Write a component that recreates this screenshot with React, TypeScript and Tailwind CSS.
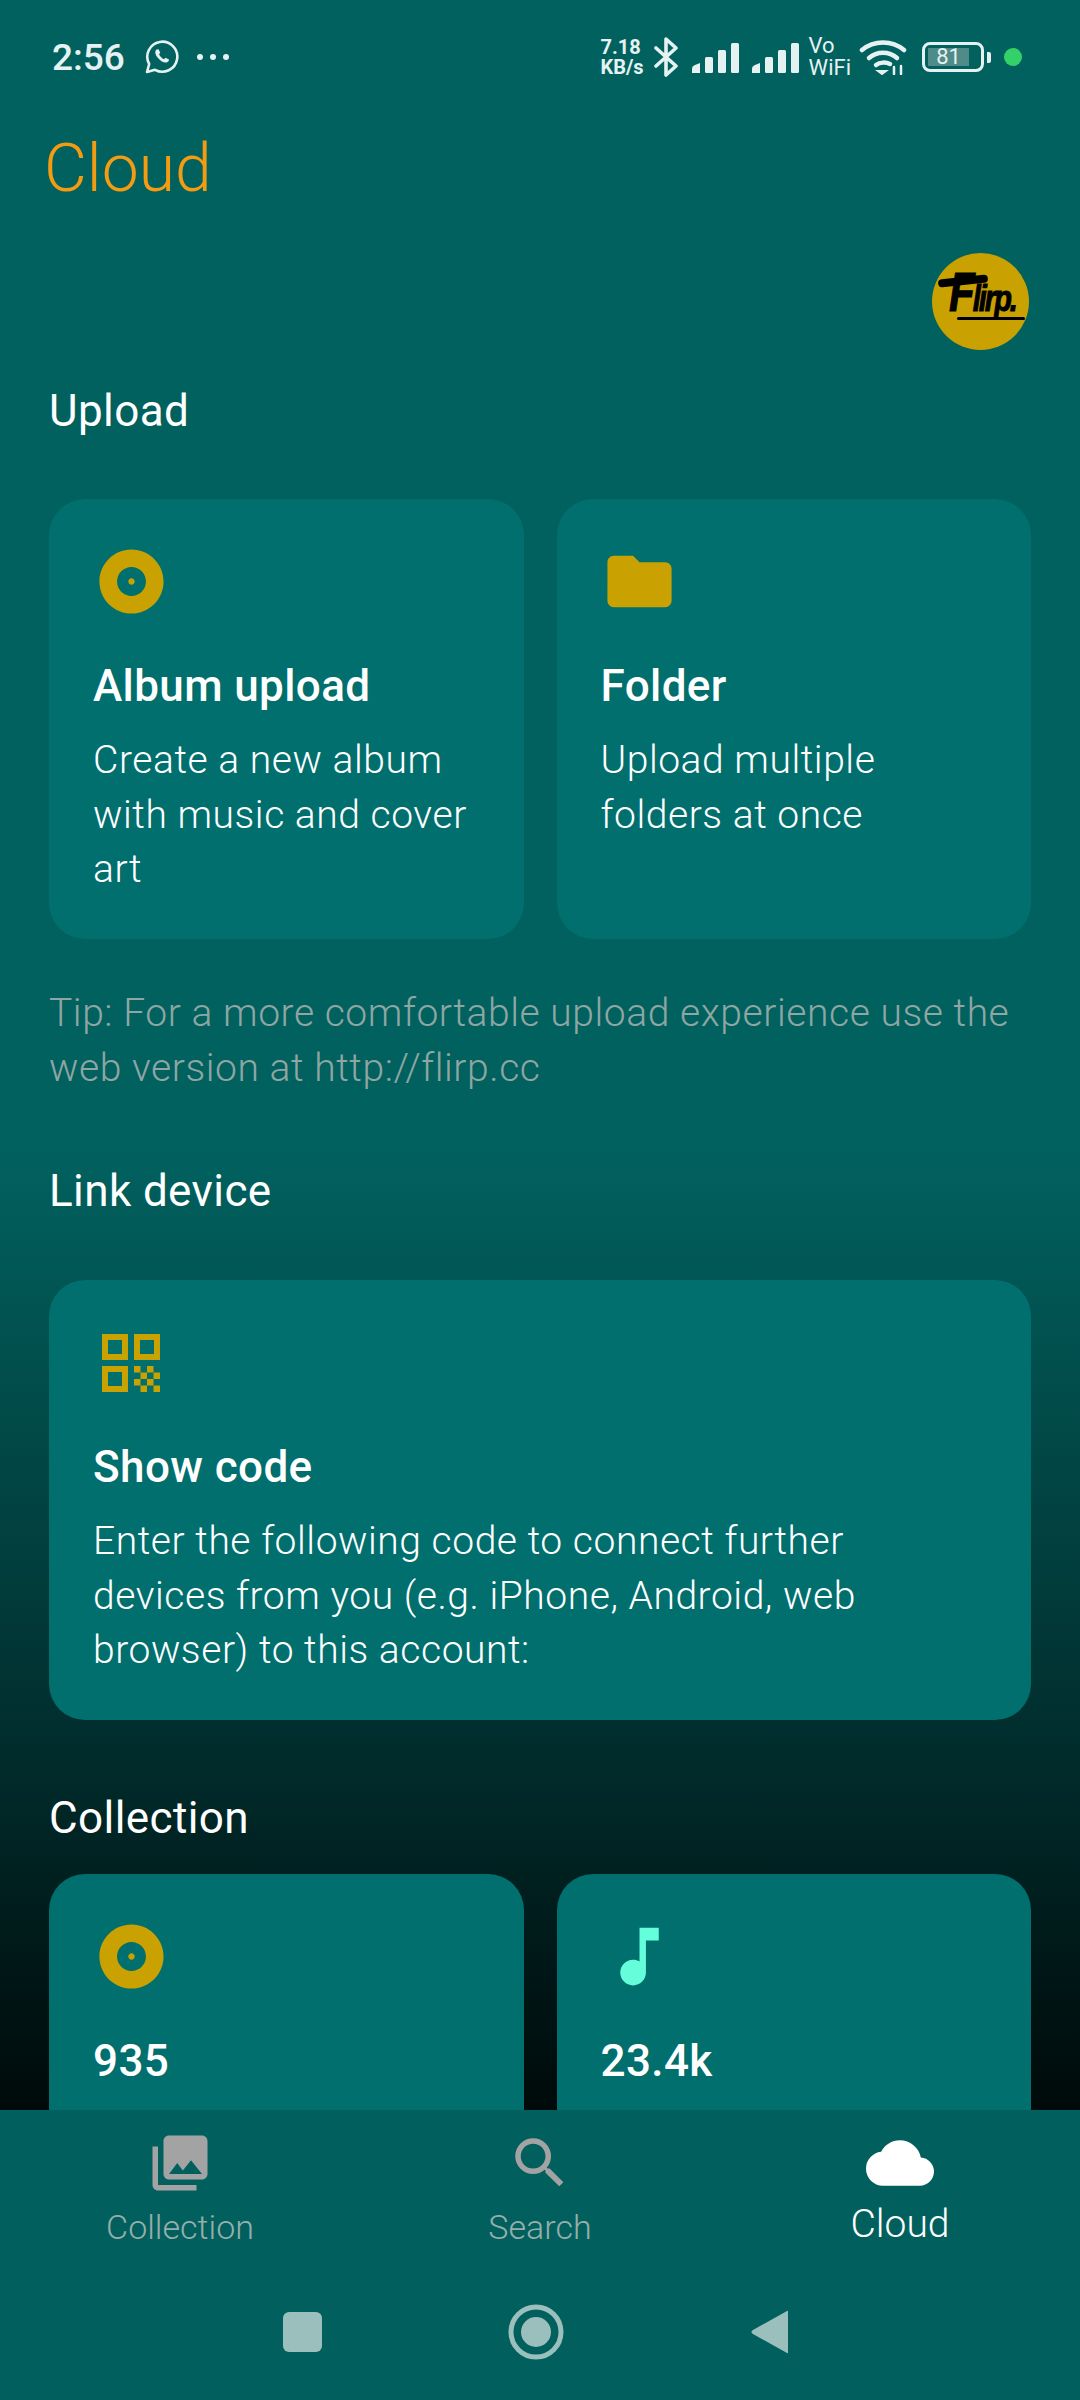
import { MdAlbum, MdFolder, MdMusicNote, MdPhotoLibrary, MdSearch, MdCloud } from "react-icons/md";

function SignalBars() {
  return (
    <svg width="48" height="32" viewBox="0 0 48 32" fill="currentColor">
      <path d="M0 32v-4q0-3 3-4l5-2v10z" />
      <rect x="13" y="16" width="8" height="16" rx="1.5" />
      <rect x="26" y="9" width="8" height="23" rx="1.5" />
      <rect x="39" y="2" width="8" height="30" rx="1.5" />
    </svg>
  );
}

function StatusBar() {
  return (
    <div className="flex h-[114px] shrink-0 items-center justify-between pl-[52px] pr-[58px] text-[#e6f2f1]">
      <div className="flex items-center">
        <span className="text-[37px] font-medium leading-none">2:56</span>
        <svg className="ml-[20px]" width="34" height="34" viewBox="0 0 34 34" fill="none" stroke="currentColor" strokeWidth="2.6">
          <path d="M2 32l2.2-8A15 15 0 1 1 10 29.8z" strokeLinejoin="round" />
          <path d="M11.5 9.5c-2 2-1.5 5 1.5 8.5s6 5 8.5 4.5c1.500-.3 2.500-1.500 2.500-3l-3.500-1.800-1.500 1.500c-2-.7-4-2.800-5-5l1.300-1.500-1.800-3.500z" fill="currentColor" stroke="none" />
        </svg>
        <div className="ml-[18px] flex gap-[7px]">
          <span className="h-[6px] w-[6px] rounded-full bg-current" />
          <span className="h-[6px] w-[6px] rounded-full bg-current" />
          <span className="h-[6px] w-[6px] rounded-full bg-current" />
        </div>
      </div>
      <div className="flex items-center">
        <div className="flex flex-col text-[20px] font-bold leading-[20px]">
          <span>7.18</span>
          <span>KB/s</span>
        </div>
        <svg className="ml-[10px]" width="24" height="40" viewBox="0 0 24 40" fill="none" stroke="currentColor" strokeWidth="3.6" strokeLinejoin="round" strokeLinecap="round">
          <path d="M2 11l20 18-10 9V2l10 9L2 29" />
        </svg>
        <div className="ml-[14px]"><SignalBars /></div>
        <div className="ml-[12px]"><SignalBars /></div>
        <div className="ml-[9px] flex flex-col text-[22px] leading-[22px]">
          <span>Vo</span>
          <span>WiFi</span>
        </div>
        <svg className="ml-[8px]" width="48" height="36" viewBox="0 0 48 36" fill="none" stroke="currentColor" strokeWidth="4.500" strokeLinecap="round">
          <path d="M3 11c12-10 30-10 42 0" />
          <path d="M10 19c8-7 20-7 28 0" />
          <path d="M17 26c4-3 10-3 14-1" />
          <path d="M19 32l4 3 4-3z" fill="currentColor" strokeWidth="2" />
          <path d="M35 35v-7M42 35v-8" strokeWidth="2.500" />
        </svg>
        <div className="ml-[15px] flex items-center">
          <div className="flex h-[30px] w-[62px] items-center rounded-[8px] border-[3px] border-current p-[3px]">
            <div className="flex h-full w-[41px] items-center justify-center bg-[#4f8b89] text-[22px] leading-none">81</div>
          </div>
          <div className="ml-[3px] h-[11px] w-[4px] rounded-r-[2px] bg-current" />
        </div>
        <div className="ml-[13px] h-[18px] w-[18px] rounded-full bg-[#34d068]" />
      </div>
    </div>
  );
}

function QrIcon() {
  // finder squares plus the checker block in the lower right
  return (
    <svg width="58" height="58" viewBox="0 0 58 58" fill="#c9a100">
      <path fillRule="evenodd" d="M0 0h26v26H0zM6 6v14h14V6z" />
      <path fillRule="evenodd" d="M32 0h26v26H32zM38 6v14h14V6z" />
      <path fillRule="evenodd" d="M0 32h26v26H0zM6 38v14h14V38z" />
      <path d="M32 32h6.500v6.500H32zM45 32h6.500v6.500H45zM38.500 38.500H45V45h-6.500zM51.500 38.500H58V45h-6.500zM32 45h6.500v6.500H32zM45 45h6.500v6.500H45zM38.500 51.500H45V58h-6.500zM51.500 51.500H58V58h-6.500z" />
    </svg>
  );
}

function FlirpLogo() {
  return (
    <div className="relative flex h-[97px] w-[97px] items-end justify-center overflow-hidden rounded-full bg-[#c9a100] pb-[30px]">
      <span className="inline-block origin-bottom scale-y-[1.3] pl-[4px] text-[29px] font-bold italic leading-none tracking-[-2px] text-black [-webkit-text-stroke:0.8px_black] [font-family:'Liberation_Sans',sans-serif] first-letter:text-[42px]">Flirp.</span>
      {/* brush strokes across the top of the F and under the word */}
      <span className="absolute left-[6px] top-[24px] h-[8px] w-[50px] rotate-[-6deg] rounded-full bg-black" />
      <span className="absolute left-[25px] top-[64px] h-[3px] w-[68px] rounded-full bg-black" />
    </div>
  );
}

function Card({ icon, title, text, className = "" }: { icon: React.ReactNode; title: string; text?: string; className?: string }) {
  return (
    <div className={`rounded-[36px] bg-[#006f6e] pl-[44px] pr-[56px] pt-[44px] ${className}`}>
      <div className="flex h-[77px] items-center">{icon}</div>
      <h3 className="mt-[38px] text-[44px] font-medium leading-[56px] tracking-[0.4px] text-white">{title}</h3>
      {text && <p className="mt-[19px] text-[39px] font-light leading-[54.500px] tracking-[0.55px] text-white">{text}</p>}
    </div>
  );
}

function SectionTitle({ children, className = "" }: { children: React.ReactNode; className?: string }) {
  return <h2 className={`text-[44px] leading-[56px] tracking-[0.4px] text-white ${className}`}>{children}</h2>;
}

function Tab({ icon, label, active }: { icon: React.ReactNode; label: string; active?: boolean }) {
  return (
    <div className="flex flex-col items-center">
      <div className={`flex h-[77px] items-center ${active ? "text-white" : "text-[#a3a3a3]"}`}>{icon}</div>
      <span className={active ? "text-[39px] font-light leading-[46px] text-white" : "mt-[3px] text-[34px] font-light leading-[46px] text-[#96aeac]"}>{label}</span>
    </div>
  );
}

export default function App() {
  return (
    <div className="flex h-[2400px] w-[1080px] flex-col overflow-hidden bg-[linear-gradient(180deg,#01615f_0px,#01615f_1150px,#013f3e_1550px,#012a2a_1775px,#001414_2000px,#000a0a_2110px)] [font-family:Roboto,sans-serif]">
      <StatusBar />
      <div className="min-h-0 flex-1 overflow-hidden">
        <h1 className="mt-[15px] pl-[44px] text-[66px] font-light leading-[80px] text-[#f39c12]">Cloud</h1>
        <div className="mt-[44px] flex justify-end pr-[51px]">
          <FlirpLogo />
        </div>

        <div className="px-[49px]">
          <SectionTitle className="mt-[33px]">Upload</SectionTitle>
          <div className="mt-[60px] grid grid-cols-2 gap-[33px]">
            <Card className="h-[440px]" icon={<MdAlbum size={77} color="#c9a100" />} title="Album upload" text="Create a new album with music and cover art" />
            <Card className="h-[440px]" icon={<MdFolder size={77} color="#c9a100" />} title="Folder" text="Upload multiple folders at once" />
          </div>
          <p className="mt-[47px] text-[39px] font-light leading-[54.500px] tracking-[0.56px] text-[#8fa6a3]">
            Tip: For a more comfortable upload experience use the web version at http://flirp.cc
          </p>
          <SectionTitle className="mt-[68px]">Link device</SectionTitle>
          <Card
            className="mt-[61px] h-[440px]"
            icon={<div className="pl-[9px]"><QrIcon /></div>}
            title="Show code"
            text="Enter the following code to connect further devices from you (e.g. iPhone, Android, web browser) to this account:"
          />
          <SectionTitle className="mt-[70px]">Collection</SectionTitle>
          <div className="mt-[28px] grid grid-cols-2 gap-[33px]">
            <Card className="h-[439px]" icon={<MdAlbum size={77} color="#c9a100" />} title="935" />
            <Card className="h-[439px]" icon={<MdMusicNote size={77} color="#64ffda" />} title="23.4k" />
          </div>
        </div>
      </div>

      <nav className="h-[290px] shrink-0 bg-[#01605e]">
        <div className="grid grid-cols-3 pt-[14px]">
          <Tab icon={<MdPhotoLibrary size={66} />} label="Collection" />
          <Tab icon={<MdSearch size={66} />} label="Search" />
          <Tab active icon={<MdCloud size={68} />} label="Cloud" />
        </div>
        <div className="mt-[54px] flex items-center justify-center pr-[10px] text-[#9bbfbd]">
          <div className="h-[40px] w-[39px] rounded-[6px] bg-current" />
          <svg className="ml-[185px]" width="58" height="56" viewBox="0 0 58 56">
            <circle cx="29" cy="28" r="25" fill="none" stroke="currentColor" strokeWidth="5" />
            <circle cx="29" cy="28" r="15" fill="currentColor" />
          </svg>
          <svg className="ml-[186px]" width="37" height="46" viewBox="0 0 37 46" fill="currentColor">
            <path d="M36 2c.5-.5 1-.300 1 .5v41c0 .800-.500 1-1 .500L2 25c-2-1-2-3 0-4z" />
          </svg>
        </div>
      </nav>
    </div>
  );
}
